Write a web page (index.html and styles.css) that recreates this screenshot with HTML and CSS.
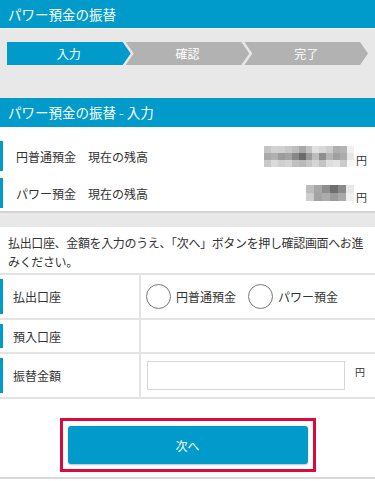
FILE: index.html
```html
<!DOCTYPE html>
<html lang="ja">
<head>
<meta charset="utf-8">
<link rel="stylesheet" href="styles.css">
</head>
<body>
<div class="page">
  <div class="title-bar">パワー預金の振替</div>
  <div class="steps-area">
    <div class="steps">
      <div class="step step-first active">入力</div>
      <div class="step step-mid">確認</div>
      <div class="step step-mid">完了</div>
    </div>
  </div>
  <div class="section-title">パワー預金の振替 - 入力</div>
  <div class="balances">
    <div class="bal-row">
      <span class="bal-label">円普通預金　現在の残高</span>
      <span class="bal-value">
        <svg class="blur" width="90" height="21" viewBox="0 0 13 3" shape-rendering="crispEdges">
          <rect x="0" y="0" width="1" height="1" fill="#c4c4c4"/><rect x="1" y="0" width="1" height="1" fill="#d2d2d2"/><rect x="2" y="0" width="1" height="1" fill="#d0d0d0"/><rect x="3" y="0" width="1" height="1" fill="#c8c8c8"/><rect x="4" y="0" width="1" height="1" fill="#bdbdbd"/><rect x="5" y="0" width="1" height="1" fill="#a8a8a8"/><rect x="6" y="0" width="1" height="1" fill="#c2c2c2"/><rect x="7" y="0" width="1" height="1" fill="#e0e0e0"/><rect x="8" y="0" width="1" height="1" fill="#d8d8d8"/><rect x="9" y="0" width="1" height="1" fill="#cdcdcd"/><rect x="10" y="0" width="1" height="1" fill="#aeaeae"/><rect x="11" y="0" width="1" height="1" fill="#b4b4b4"/><rect x="12" y="0" width="1" height="1" fill="#f0f0f0"/>
          <rect x="0" y="1" width="1" height="1" fill="#a9a9a9"/><rect x="1" y="1" width="1" height="1" fill="#b0b0b0"/><rect x="2" y="1" width="1" height="1" fill="#9c9c9c"/><rect x="3" y="1" width="1" height="1" fill="#a3a3a3"/><rect x="4" y="1" width="1" height="1" fill="#878787"/><rect x="5" y="1" width="1" height="1" fill="#6a6a6a"/><rect x="6" y="1" width="1" height="1" fill="#9a9a9a"/><rect x="7" y="1" width="1" height="1" fill="#bcbcbc"/><rect x="8" y="1" width="1" height="1" fill="#8e8e8e"/><rect x="9" y="1" width="1" height="1" fill="#b5b5b5"/><rect x="10" y="1" width="1" height="1" fill="#a0a0a0"/><rect x="11" y="1" width="1" height="1" fill="#acacac"/><rect x="12" y="1" width="1" height="1" fill="#e6e6e6"/>
          <rect x="0" y="2" width="1" height="1" fill="#c9c9c9"/><rect x="1" y="2" width="1" height="1" fill="#dadada"/><rect x="2" y="2" width="1" height="1" fill="#cfcfcf"/><rect x="3" y="2" width="1" height="1" fill="#d4d4d4"/><rect x="4" y="2" width="1" height="1" fill="#c0c0c0"/><rect x="5" y="2" width="1" height="1" fill="#b9b9b9"/><rect x="6" y="2" width="1" height="1" fill="#c6c6c6"/><rect x="7" y="2" width="1" height="1" fill="#d6d6d6"/><rect x="8" y="2" width="1" height="1" fill="#c3c3c3"/><rect x="9" y="2" width="1" height="1" fill="#dedede"/><rect x="10" y="2" width="1" height="1" fill="#e3e3e3"/><rect x="11" y="2" width="1" height="1" fill="#cbcbcb"/><rect x="12" y="2" width="1" height="1" fill="#f6f6f6"/>
        </svg>
        <span class="yen">円</span>
      </span>
    </div>
    <div class="bal-row">
      <span class="bal-label">パワー預金　現在の残高</span>
      <span class="bal-value">
        <svg class="blur" width="48" height="16" viewBox="0 0 6 2" shape-rendering="crispEdges">
          <rect x="0" y="0" width="1" height="1" fill="#bdbdbd"/><rect x="1" y="0" width="1" height="1" fill="#a6a6a6"/><rect x="2" y="0" width="1" height="1" fill="#8e8e8e"/><rect x="3" y="0" width="1" height="1" fill="#6f6f6f"/><rect x="4" y="0" width="1" height="1" fill="#8a8a8a"/><rect x="5" y="0" width="1" height="1" fill="#e8e8e8"/>
          <rect x="0" y="1" width="1" height="1" fill="#cdcdcd"/><rect x="1" y="1" width="1" height="1" fill="#a3a3a3"/><rect x="2" y="1" width="1" height="1" fill="#acacac"/><rect x="3" y="1" width="1" height="1" fill="#9b9b9b"/><rect x="4" y="1" width="1" height="1" fill="#a9a9a9"/><rect x="5" y="1" width="1" height="1" fill="#f0f0f0"/>
        </svg>
        <span class="yen">円</span>
      </span>
    </div>
  </div>
  <div class="gap-band"></div>
  <p class="instruction">払出口座、金額を入力のうえ、「次へ」ボタンを押し確認画面へお進みください。</p>
  <div class="form">
    <div class="form-row row-pay">
      <div class="form-label">払出口座</div>
      <div class="form-field radios">
        <label class="radio"><span class="circle"></span>円普通預金</label>
        <label class="radio"><span class="circle"></span>パワー預金</label>
      </div>
    </div>
    <div class="form-row row-dep">
      <div class="form-label">預入口座</div>
      <div class="form-field"></div>
    </div>
    <div class="form-row row-amt">
      <div class="form-label">振替金額</div>
      <div class="form-field amount">
        <input class="amount-input" type="text">
        <span class="yen-small">円</span>
      </div>
    </div>
  </div>
  <div class="button-area">
    <div class="highlight">
      <button class="next-btn" type="button">次へ</button>
    </div>
  </div>
</div>
</body>
</html>
```
FILE: styles.css
```css
* { box-sizing: border-box; }
html, body { margin: 0; padding: 0; background: #fff; }
body {
  font-family: "Noto Sans CJK JP", "Noto Sans", sans-serif;
  color: #333;
  width: 375px;
  height: 481px;
  overflow: hidden;
}
.title-bar {
  height: 29px;
  background: #009bcb;
  color: #fff;
  font-size: 13.5px;
  line-height: 28px;
  padding-left: 8px;
  border-bottom: 1px solid #f2f2f2;
}
.steps-area {
  background: #e8e8e8;
  height: 69px;
  padding: 13px 7px 0 7px;
}
.steps {
  display: flex;
  height: 23px;
}
.step {
  flex: 1;
  display: flex;
  align-items: center;
  justify-content: center;
  font-size: 12px;
  color: #fff;
  background: #b2b2b2;
  margin-right: -5px;
}
.step:last-child { margin-right: 0; }
.step-first {
  clip-path: polygon(0 0, calc(100% - 8px) 0, 100% 50%, calc(100% - 8px) 100%, 0 100%);
}
.step-mid {
  clip-path: polygon(0 0, calc(100% - 8px) 0, 100% 50%, calc(100% - 8px) 100%, 0 100%, 8px 50%);
}
.step.active { background: #009bcb; }
.section-title {
  height: 29px;
  background: #009bcb;
  color: #fff;
  font-size: 13.5px;
  line-height: 29px;
  padding-left: 8px;
}
.balances {
  padding: 14px 0 3px 0;
  border-bottom: 2px solid #d4d4d4;
}
.bal-row {
  display: flex;
  align-items: center;
  justify-content: space-between;
  height: 30px;
  margin-bottom: 7px;
  border-left: 3px solid #009bcb;
  padding-left: 13px;
  padding-right: 8px;
  font-size: 12px;
}
.bal-row:last-child { margin-bottom: 0; }
.bal-value {
  display: flex;
  align-items: center;
}
.blur { display: block; }
.yen { font-size: 11px; margin-left: 2px; margin-top: 8px; }
.gap-band {
  height: 14px;
  background: #e8e8e8;
}
.instruction {
  margin: 0;
  height: 48px;
  padding: 6px 4px 0 8px;
  font-size: 12px;
  letter-spacing: -0.35px;
  line-height: 19px;
  border-bottom: 2px solid #e3e3e3;
}
.form-row {
  display: flex;
  border-bottom: 2px solid #e3e3e3;
}
.form-label {
  width: 141px;
  border-right: 2px solid #e3e3e3;
  font-size: 12px;
  display: flex;
  align-items: center;
  padding-left: 13px;
  position: relative;
}
.form-label::before {
  content: "";
  position: absolute;
  left: 0;
  top: 4px;
  bottom: 4px;
  width: 3px;
  background: #009bcb;
}
.form-field {
  flex: 1;
  display: flex;
  align-items: center;
}
.row-pay { height: 45px; }
.row-dep { height: 34px; }
.row-amt { height: 45px; }
.radios { padding-left: 5px; gap: 12px; }
.radio {
  display: flex;
  align-items: center;
  font-size: 12px;
  gap: 5px;
}
.circle {
  width: 25px;
  height: 25px;
  border: 1px solid #777;
  border-radius: 50%;
  background: #fff;
}
.amount { padding-left: 6px; }
.amount-input {
  width: 198px;
  height: 29px;
  border: 1px solid #d6d6d6;
  margin: 0;
  padding: 0;
  background: #fff;
}
.yen-small { font-size: 10px; margin-left: 10px; margin-top: -8px; }
.button-area {
  height: 80px;
  border-bottom: 2px solid #d8d8d8;
  display: flex;
  justify-content: center;
  padding-top: 19px;
}
.highlight {
  width: 256px;
  height: 54px;
  border: 3px solid #d80c3c;
  padding: 5px;
}
.next-btn {
  display: block;
  width: 100%;
  height: 100%;
  border: none;
  border-radius: 3px;
  background: #009bcb;
  color: #fff;
  font-family: "Noto Sans CJK JP", sans-serif;
  font-size: 12px;
  box-shadow: 0 1px 2px rgba(0,0,0,0.25);
}
```
